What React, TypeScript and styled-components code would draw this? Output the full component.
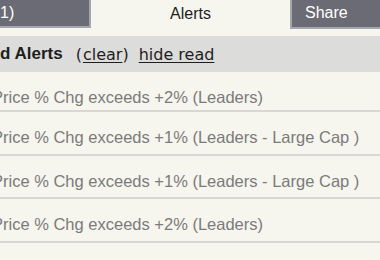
import styled, { createGlobalStyle } from "styled-components";

const GlobalStyle = createGlobalStyle`
    html, body {
        margin: 0;
        padding: 0;
        background: #f6f5ee;
        overflow: hidden;
    }
`;

const alerts = [
    "Price % Chg exceeds +2% (Leaders)",
    "Price % Chg exceeds +1% (Leaders - Large Cap )",
    "Price % Chg exceeds +1% (Leaders - Large Cap )",
    "Price % Chg exceeds +2% (Leaders)",
    "Price % Chg exceeds +1% (Leaders - Large Cap )",
];

const App = () => {
    return (
        <Page>
            <GlobalStyle />
            <TabBar>
                <Tab $side="left">1)</Tab>
                <Tab $active>Alerts</Tab>
                <Tab $side="right">Share</Tab>
            </TabBar>
            <FilterBar>
                <Title>d Alerts</Title>
                <Paren>(</Paren>
                <Link>clear</Link>
                <Paren>)</Paren>
                <Link $spaced>hide read</Link>
            </FilterBar>
            <List>
                {alerts.map((text, index) => (
                    <Row key={index}>{text}</Row>
                ))}
            </List>
        </Page>
    );
};

const Page = styled.div`
    width: 380px;
    height: 260px;
    overflow: hidden;
    background: #f6f5ee;
    font-family: "Liberation Sans", Arial, sans-serif;
`;

const TabBar = styled.div`
    display: grid;
    grid-template-columns: 91px 1fr 90px;
    align-items: start;
    height: 29px;
    margin-bottom: 7px;
`;

const Tab = styled.div<{ $active?: boolean; $side?: "left" | "right" }>`
    box-sizing: border-box;
    display: flex;
    align-items: center;
    height: ${(p) => (p.$side === "left" ? "28px" : "29px")};
    font-size: 16px;
    color: ${(p) => (p.$active ? "#1e1e1e" : "#ffffff")};
    background: ${(p) => (p.$active ? "transparent" : "#6a6b74")};
    justify-content: ${(p) => (p.$active ? "center" : "flex-start")};
    padding-left: ${(p) => (p.$side === "right" ? "13px" : "0")};
    padding-bottom: 1px;
    border-right: ${(p) => (p.$side === "left" ? "2px solid #a4a7b0" : "none")};
    border-left: ${(p) => (p.$side === "right" ? "2px solid #a4a7b0" : "none")};
    border-bottom: ${(p) => (p.$active ? "none" : "2px solid #a4a7b0")};
    white-space: nowrap;
    overflow: hidden;
`;

const FilterBar = styled.div`
    display: flex;
    align-items: center;
    height: 36px;
    background: #dcdcdb;
    white-space: nowrap;
    color: #1e1e1e;
`;

const Title = styled.span`
    font-family: "Liberation Sans", Arial, sans-serif;
    font-weight: bold;
    font-size: 17px;
    margin-right: 13px;
`;

const Paren = styled.span`
    font-family: "DejaVu Sans", Verdana, sans-serif;
    font-size: 16px;
`;

const Link = styled.span<{ $spaced?: boolean }>`
    font-family: "DejaVu Sans", Verdana, sans-serif;
    font-size: 16px;
    text-decoration: underline;
    text-underline-offset: 2px;
    margin-left: ${(p) => (p.$spaced ? "10px" : "1px")};
    cursor: pointer;
`;

const List = styled.div`
    display: flex;
    flex-direction: column;
`;

const Row = styled.div`
    box-sizing: border-box;
    height: 43.5px;
    padding-top: 16px;
    margin-left: -8px;
    font-size: 16.5px;
    color: #7b7b7b;
    white-space: nowrap;
    border-bottom: 2px solid #d8d8d2;

    &:first-child {
        height: 40px;
    }
`;

export default App;
